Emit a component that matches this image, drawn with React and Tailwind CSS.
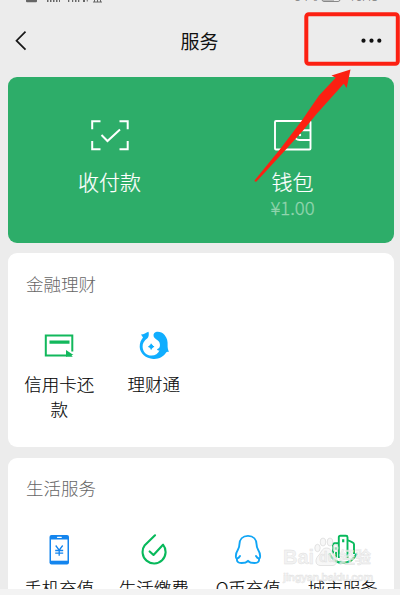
import React from 'react';

function StatusBar() {
  return (
    <div className="flex h-[5px] items-start overflow-hidden pl-[25px] pr-[22px] text-[#777]">
      <svg width="78" height="5" viewBox="0 0 78 5" className="shrink-0" fill="#666">
        <path d="M1 0h11v1.2q0 1-1 1H2q-1 0-1-1z" />
        <path d="M22 0h1.5v2H22zM25 0h1.5v2H25zM28 0h1.5v2H28zM31 0h1.5v2H31zM34 0h1v2h-1z" />
        <path d="M43 0h1.3v2H43zM47 0h1.2v2H47zM50 0h1.5v2H50zM53 0h1.3v2H53zM58 0h2v2h-2zM61 1l2-1v1.5zM68 1.5h9v1h-9zM69 0h1v2h-1zM72 0h1v2h-1zM75 0h1v2h-1z" />
      </svg>
      <div className="-mt-[12px] ml-auto flex h-[18px] items-end text-[13px] leading-[18px]">
        <span className="font-[Roboto,sans-serif]">64%</span>
        <svg width="21" height="18" viewBox="0 0 21 18" className="ml-[3px] mr-[7px]">
          <rect x="1" y="5" width="18" height="8.500" rx="2" fill="none" stroke="#888" />
          <path d="M2 6h11v6.500H2z" fill="#888" />
        </svg>
        <span className="font-[Roboto,sans-serif] text-[12px]">16:48</span>
      </div>
    </div>
  );
}

function ScanIcon() {
  return (
    <svg width="38" height="31" viewBox="0 0 38 31" fill="none" stroke="#fff" strokeWidth="2">
      <path d="M9.500 1.300H1.200v8M28.500 1.300h8.200v8M1.200 21v8.200h8.300M36.700 21v8.200h-8.200" />
      <path d="M10.500 15l6 6L29 9.500" />
    </svg>
  );
}

function WalletIcon() {
  return (
    <svg width="38" height="31" viewBox="0 0 38 31" fill="none" stroke="#fff" strokeWidth="1.900">
      <rect x="1" y="1" width="35.500" height="28.500" rx="1" />
      <path d="M37 10.200H25.500a4.900 4.900 0 0 0 0 9.800H37" />
      <circle cx="26" cy="15" r="1.200" fill="#fff" stroke="none" />
    </svg>
  );
}

function CardIcon() {
  return (
    <svg width="32" height="32" viewBox="0 0 32 32" fill="none">
      <path d="M29.300 21.500V5.500H2.800v20H24" stroke="#12b85c" strokeWidth="2" />
      <path d="M6.500 10.500h20v3.200h-20zM23 20l7.500 5h-2l1.200 1.700H23z" fill="#12b85c" />
    </svg>
  );
}

function LicaitongIcon() {
  return (
    <svg width="32" height="32" viewBox="0 0 32 32" fill="#10aeff">
      <path d="M3 4.500C6 4.500 8 2.500 10.500 1.700c.6 2.500.3 4.500-.8 6.300C6 10.500 4.400 13.500 4.600 17c.3 5 4 8.600 9 8.600 3.700 0 6.500-2 7.900-5.100-1.300.2-2.200-.3-2.500-1.300 2.200-.7 3.300-2.500 2.900-5-.3-2.400-1.800-3.800-3.800-5-2.800-1.700-3.300-4.200-1.800-6.200 2.500-2.300 7.500-1.300 10.300 2 2.600 3.100 3.200 6.500 3 10-.1 2.600.3 4.600 1.400 7-1.400-.4-2.200-.3-2.900.5-2.700 4.300-7.500 6.800-12.800 6.400C7.800 28.400 2 23.700 1.700 17 1.600 13 3 9.800 5 7.500z" />
      <circle cx="13.200" cy="16.600" r="2.100" />
      <path d="M12.500 13.700h1.400v5.800h-1.400zM10.300 15.900h5.800v1.400h-5.800z" />
    </svg>
  );
}

function PhoneIcon() {
  return (
    <svg width="32" height="32" viewBox="0 0 32 32" fill="none">
      <rect x="6.500" y="1" width="19.500" height="29.500" rx="2" fill="#1485ee" />
      <path d="M8 5.500h16.500v21.200H8z" fill="#fff" />
      <path d="M14.500 3.300h3.800" stroke="#fff" strokeWidth="1.200" strokeLinecap="round" />
      <path d="M12.700 11.500l3.500 4.700 3.500-4.700M12.200 16.500h8M12.200 19.200h8M16.200 16.200v5.500" stroke="#1485ee" strokeWidth="1.300" />
    </svg>
  );
}

function DropIcon() {
  return (
    <svg width="32" height="32" viewBox="0 0 32 32" fill="none" stroke="#07b95b" strokeWidth="2.100" strokeLinecap="round" strokeLinejoin="round">
      <path d="M17 1.300L6.800 11.200A11.500 11.500 0 1 0 25 10.700L15.500 21l-3.800-3.600" />
    </svg>
  );
}

function PenguinIcon() {
  return (
    <svg width="32" height="32" viewBox="0 0 32 32" fill="none" stroke="#10a5f5" strokeWidth="1.900" strokeLinejoin="round" strokeLinecap="round">
      <path d="M16 1.900c5.400 0 8.600 3.600 8.600 8.700 0 1.800.4 3.300 1.400 4.900 1.700 2.800 2.500 5.300 2 7.900-.4 1.800-2.300 1.400-4-1.400M16 1.900c-5.400 0-8.600 3.600-8.600 8.700 0 1.800-.4 3.300-1.400 4.900-1.700 2.800-2.500 5.300-2 7.900.4 1.800 2.300 1.400 4-1.400" />
      <path d="M5 24.500c-.5 3 1 4.500 4.500 4.500 3 0 5.300-.8 6.500-2.200 1.200 1.400 3.500 2.200 6.500 2.200 3.500 0 5-1.500 4.500-4.500" />
    </svg>
  );
}

function CityIcon() {
  return (
    <svg width="32" height="32" viewBox="0 0 32 32" fill="none" stroke="#07b95b" strokeWidth="1.900">
      <path d="M11.800 24V3.300q0-1.500 1.500-1.500H19q1.500 0 1.500 1.500V24M20.500 6l5 2.300q1.500.6 1.500 2V20M12 9.200H7.800Q6 9.200 6 11v8.500M9 18v5.500" strokeLinejoin="round" />
      <path d="M2.300 19.500c6.300 12.600 21 12.600 27.500 0" strokeWidth="2.200" />
      <path d="M16.200 5.200v3M8.800 13.200v2.500" strokeWidth="2.200" />
    </svg>
  );
}

function Service({ icon, children }) {
  return (
    <div className="flex flex-col items-center">
      {icon}
      <div className="mt-[9px] w-[74px] text-center text-[17.5px] leading-[25px] text-[#080808] [-webkit-text-stroke:0.15px_#080808]">{children}</div>
    </div>
  );
}

function Watermark() {
  return (
    <div className="absolute left-[283px] top-[537px] h-[50px] w-[92px] text-[#eee]/75 [-webkit-text-stroke:0.4px_#d4d4d4aa]">
      <div className="flex h-[33px] items-end whitespace-nowrap font-['Liberation_Sans','Noto_Sans_CJK_SC',sans-serif] font-bold leading-[25px]">
        <span className="w-[31px] text-[20px]">Bai</span>
        <span className="relative w-[25px] text-[14px]">
          <svg width="26" height="30" viewBox="0 0 26 30" className="absolute -top-[8px] left-0" fill="#f2f2f2" fillOpacity=".6" stroke="#d8d8d8" strokeWidth=".7">
            <ellipse cx="3.500" cy="11" rx="2.700" ry="3.700" />
            <ellipse cx="9" cy="5" rx="2.800" ry="4" />
            <ellipse cx="16" cy="5" rx="2.800" ry="4" />
            <ellipse cx="21.500" cy="11" rx="2.700" ry="3.700" />
            <path d="M12.500 11c5 0 5 5 8.500 8 3.500 3.500 2 9-2 9.500H6c-5-.5-5-6-2-9.500 3.500-3 3.500-8 8.500-8z" />
          </svg>
          <span className="relative left-[5px]">du</span>
        </span>
        <span className="text-[16px]">经验</span>
      </div>
      <div className="whitespace-nowrap font-['Liberation_Sans',sans-serif] text-[11px] font-bold leading-[14px] tracking-[-0.4px]">jingyan.baidu.com</div>
    </div>
  );
}

export default function App() {
  return (
    <div className="relative flex h-[595px] w-[400px] flex-col overflow-hidden bg-[#ececec] font-['Noto_Sans_CJK_SC',sans-serif] font-light">
      <StatusBar />
      <header className="flex h-[72px] shrink-0 items-center justify-between pl-[14px] pr-[17px]">
        <svg width="22" height="22" viewBox="0 0 22 22" fill="none" stroke="#181818" strokeWidth="1.700">
          <path d="M11.500 1.700L2.500 10.700l9 9" />
        </svg>
        <h1 className="ml-[2px] text-[19px] font-normal leading-[28px] text-[#111]">服务</h1>
        <svg width="22" height="22" viewBox="0 0 22 22" fill="#111">
          <circle cx="2.500" cy="10.700" r="2.100" />
          <circle cx="10.500" cy="10.700" r="2.100" />
          <circle cx="18.300" cy="10.700" r="2.100" />
        </svg>
      </header>
      <section className="ml-[8px] grid h-[166px] w-[386px] shrink-0 grid-cols-2 rounded-[9px] bg-[#2dad69] px-[10px] pt-[43px] text-white">
        <div className="flex flex-col items-center">
          <ScanIcon />
          <div className="mt-[15px] text-[21px] leading-[30px] [-webkit-text-stroke:0.2px_white]">收付款</div>
        </div>
        <div className="flex flex-col items-center">
          <WalletIcon />
          <div className="mt-[15px] text-[21px] leading-[30px] [-webkit-text-stroke:0.2px_white]">钱包</div>
          <div className="text-[18.5px] leading-[22px] text-[#91d4ae] [-webkit-text-stroke:0.3px_#91d4ae]">¥1.00</div>
        </div>
      </section>
      <section className="ml-[8px] mt-[10px] h-[194px] w-[386px] shrink-0 rounded-[9px] bg-white px-[4px] pt-[18px]">
        <h2 className="pl-[14px] text-[17.5px] leading-[26px] text-[#666]">金融理财</h2>
        <div className="mt-[33px] grid grid-cols-4">
          <Service icon={<CardIcon />}>信用卡还款</Service>
          <Service icon={<LicaitongIcon />}>理财通</Service>
        </div>
      </section>
      <section className="ml-[8px] mt-[11px] h-[131px] w-[386px] shrink-0 overflow-hidden rounded-t-[9px] bg-white px-[4px] pt-[17px]">
        <h2 className="pl-[14px] text-[17.5px] leading-[26px] text-[#666]">生活服务</h2>
        <div className="mt-[33px] grid grid-cols-4">
          <Service icon={<PhoneIcon />}>手机充值</Service>
          <Service icon={<DropIcon />}>生活缴费</Service>
          <Service icon={<PenguinIcon />}>Q币充值</Service>
          <Service icon={<CityIcon />}>城市服务</Service>
        </div>
      </section>
      <div className="h-[6px] shrink-0 bg-[#f3f3f3]" />
      <Watermark />
      <svg width="400" height="190" viewBox="0 0 400 190" className="absolute left-0 top-0" fill="none">
        <rect x="306.300" y="14.300" width="91.500" height="49.500" rx="2.500" stroke="#fc2012" strokeWidth="4" />
        <path d="M350.500 69.500L331.500 75.500L335.700 77.800L319 95.500L301.500 121L280 149.300L254.500 180.500Q254.500 182 256.500 181.500L285 150.500L303 130.500L317 113.500L343.700 83.700L346.700 88z" fill="#fc2012" />
      </svg>
    </div>
  );
}
